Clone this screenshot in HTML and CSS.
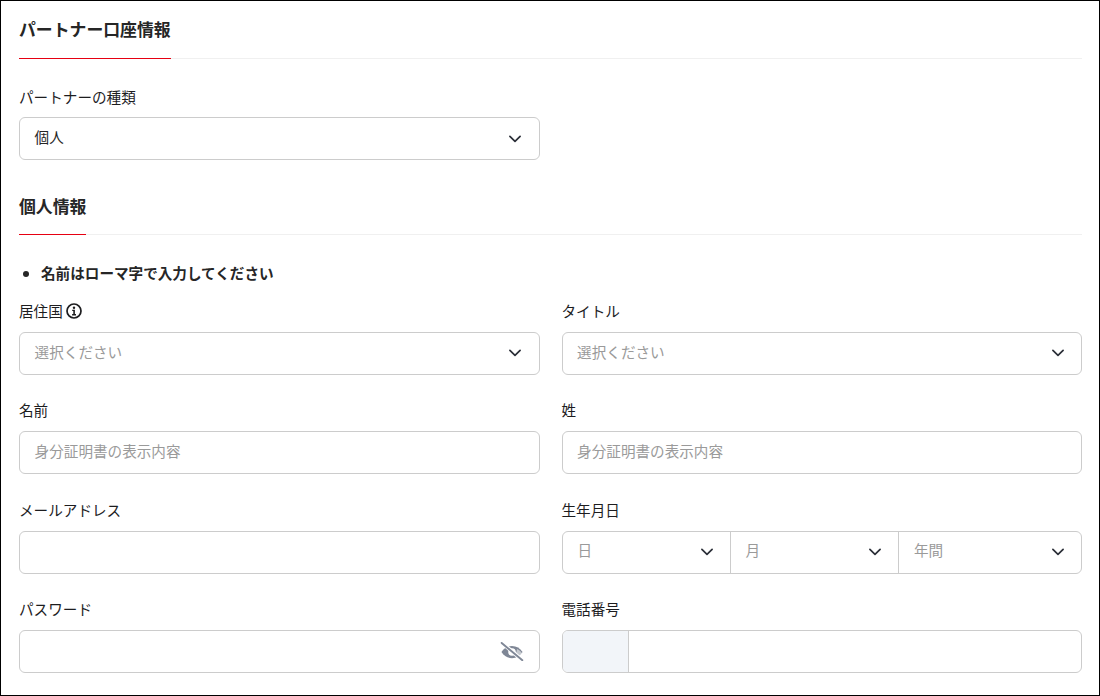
FILE: index.html
```html
<!DOCTYPE html>
<html lang="ja">
<head>
<meta charset="utf-8">
<title>パートナー口座情報</title>
<link rel="stylesheet" href="styles.css">
</head>
<body>
<svg class="sprite" width="0" height="0" aria-hidden="true">
  <symbol id="chev" viewBox="0 0 12 8"><path d="M.9 1.300 6 6.300l5.100-5" fill="none" stroke="#2b2f38" stroke-width="1.700" stroke-linecap="round" stroke-linejoin="round"/></symbol>
</svg>
<main class="frame">
  <section class="head first"><h2 class="title">パートナー口座情報</h2></section>
  <div class="field single">
    <label class="label">パートナーの種類</label>
    <div class="box"><span class="val">個人</span><svg class="chev"><use href="#chev"/></svg></div>
  </div>
  <section class="head second"><h2 class="title">個人情報</h2></section>
  <ul class="notes"><li>名前はローマ字で入力してください</li></ul>
  <div class="grid">
    <div class="field">
      <label class="label">居住国<svg class="info" viewBox="0 0 16 16"><circle cx="8" cy="8" r="7" fill="none" stroke="#1d1d1f" stroke-width="1.700"/><circle cx="8" cy="4.700" r="1.200" fill="#1d1d1f"/><path d="M6.200 6.800h2.700v4.300h1.100v1.300H6.100v-1.300h1.200V8.100H6.200z" fill="#1d1d1f"/></svg></label>
      <div class="box"><span class="ph">選択ください</span><svg class="chev"><use href="#chev"/></svg></div>
    </div>
    <div class="field">
      <label class="label">タイトル</label>
      <div class="box"><span class="ph">選択ください</span><svg class="chev"><use href="#chev"/></svg></div>
    </div>
    <div class="field">
      <label class="label">名前</label>
      <div class="box"><span class="ph">身分証明書の表示内容</span></div>
    </div>
    <div class="field">
      <label class="label">姓</label>
      <div class="box"><span class="ph">身分証明書の表示内容</span></div>
    </div>
    <div class="field">
      <label class="label">メールアドレス</label>
      <div class="box"></div>
    </div>
    <div class="field">
      <label class="label">生年月日</label>
      <div class="box split">
        <div class="part"><span class="ph">日</span><svg class="chev"><use href="#chev"/></svg></div>
        <div class="part"><span class="ph">月</span><svg class="chev"><use href="#chev"/></svg></div>
        <div class="part last"><span class="ph">年間</span><svg class="chev"><use href="#chev"/></svg></div>
      </div>
    </div>
    <div class="field">
      <label class="label">パスワード</label>
      <div class="box">
        <svg class="eye" viewBox="0 0 22 18"><path d="M1 9.500c2.400-3.800 5.800-5.800 10-5.800s7.600 2 10 5.800c-2.400 3.800-5.800 5.800-10 5.800S3.400 13.300 1 9.500z" fill="#7f8796"/><circle cx="11" cy="9.500" r="3.600" fill="#fff"/><path d="M7.700 4.600 17 14.300l2-1.400c.6-.5 1.200-1.100 1.700-1.900-1.200-1.900-3-3.600-5-4.300-.2 1.400-.2 3.300-1.800 3.900.3-2.200-1.500-3.600-3.600-3.300z" fill="#fff" opacity=".55"/><path d="M1.500.700l19.300 16.600" stroke="#fff" stroke-width="3.600"/><path d="M1.200.900l19.600 16.400" stroke="#7f8796" stroke-width="1.800" stroke-linecap="round"/></svg>
      </div>
    </div>
    <div class="field">
      <label class="label">電話番号</label>
      <div class="box phone"><div class="code"></div></div>
    </div>
  </div>
</main>
</body>
</html>
```
FILE: styles.css
```css
* { box-sizing: border-box; }
html, body { margin: 0; padding: 0; background: #fff; }
body {
  font-family: "Noto Sans CJK JP", "Noto Sans", sans-serif;
  font-size: 14.6px;
  color: #1d1d1f;
}
.sprite { position: absolute; }
.frame {
  width: 1100px;
  height: 696px;
  border: 1px solid #000;
  padding: 0 17px 0 18px;
  overflow: hidden;
}
.head {
  border-bottom: 1px solid #f0f0f0;
  display: flex;
}
.head.first { height: 58px; }
.head.second { height: 57px; margin-top: 18px; }
.title {
  margin: 0 0 -1px;
  font-size: 16.850px;
  font-weight: 700;
  line-height: 24px;
  padding-top: 16px;
  border-bottom: 1px solid #e60012;
  color: #262626;
}
.field { display: flex; flex-direction: column; min-width: 0; }
.field.single { width: 520.500px; margin-top: 27px; }
.label {
  display: flex;
  align-items: center;
  height: 22px;
  line-height: 22px;
  margin-bottom: 9px;
  color: #1d1d1f;
}
.grid .label { margin-bottom: 9.900px; }
.info { width: 16px; height: 16px; margin-left: 3px; }
.box {
  position: relative;
  display: flex;
  align-items: center;
  justify-content: space-between;
  height: 43px;
  border: 1px solid #cccccc;
  border-radius: 6px;
  padding: 0 18px 0 14.600px;
  background: #fff;
}
.grid .field:nth-child(even) .box { padding-right: 17px; }
.val { color: #262626; margin-bottom: 4px; }
.ph { color: #9a9a9a; margin-bottom: 4px; }
.chev { width: 12px; height: 8px; flex: none; }
.notes {
  margin: 27px 0 0;
  padding: 0 0 0 22px;
  font-weight: 700;
  line-height: 22px;
  color: #262626;
}
.grid {
  display: grid;
  grid-template-columns: 1fr 1fr;
  column-gap: 22px;
  row-gap: 24.600px;
  margin-top: 16px;
}
.grid .field:nth-child(even) .box.split,
.split {
  display: grid;
  grid-template-columns: 167px 168px 1fr;
  padding: 0;
}
.part {
  height: 100%;
  display: flex;
  align-items: center;
  justify-content: space-between;
  padding: 0 17px 0 15px;
  border-left: 1px solid #cccccc;
}
.part.last { padding-left: 15.500px; }
.part .ph { margin-bottom: 6px; }
.part:first-child { border-left: 0; }
.eye {
  width: 24px;
  height: 19px;
  position: absolute;
  top: 11px;
  right: 15px;
}
.grid .field:nth-child(even) .box.phone,
.phone { padding: 0; overflow: hidden; }
.code {
  width: 66px;
  height: 100%;
  background: #f2f5f9;
  border-right: 1px solid #cccccc;
}
```
